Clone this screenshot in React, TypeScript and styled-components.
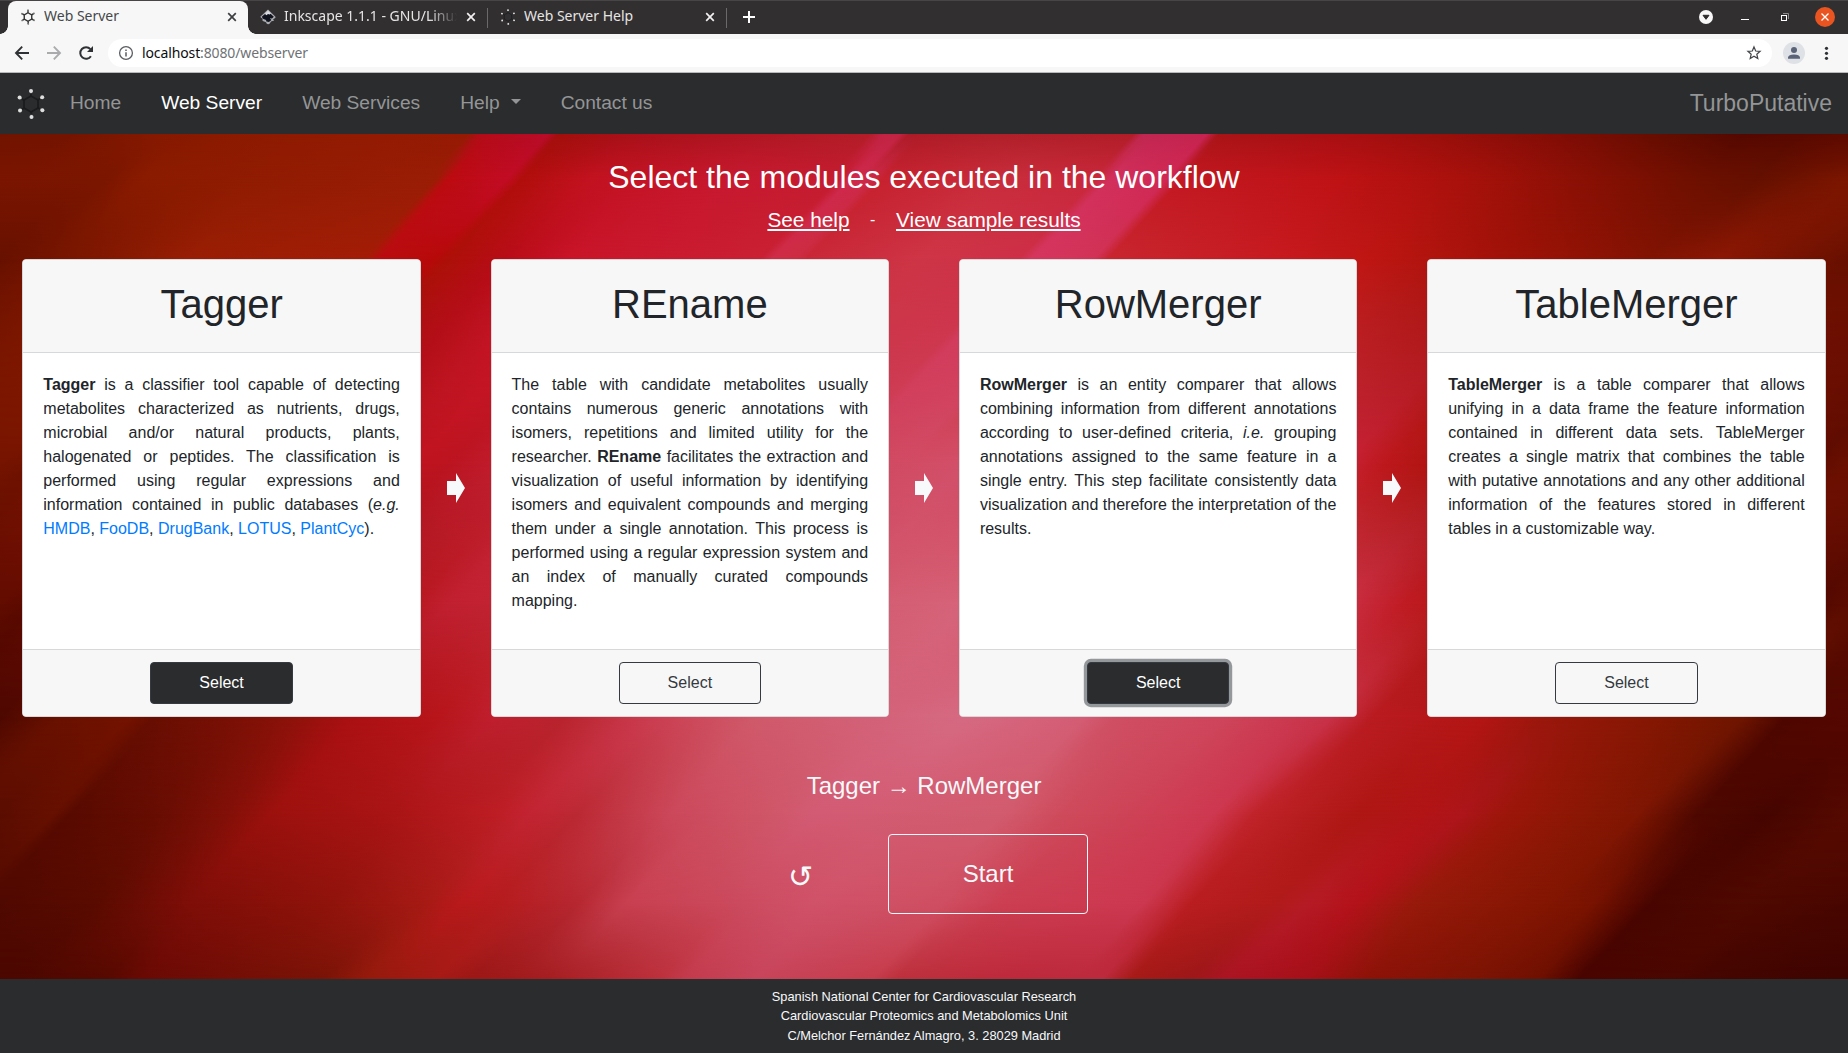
import React from 'react';
import styled, { createGlobalStyle, css } from 'styled-components';

const GlobalStyle = createGlobalStyle`
  *, *::before, *::after { box-sizing: border-box; }
  body {
    margin: 0;
    overflow: hidden;
    font-family: "Liberation Sans", Arial, sans-serif;
    font-size: 16px;
    line-height: 1.5;
    color: #212529;
  }
  h1, h2, p { margin: 0; font-weight: 400; }
  button { font-family: inherit; cursor: pointer; }
`;

const Page = styled.div`
  width: 1848px;
  height: 1053px;
  display: flex;
  flex-direction: column;
`;

/* ---------- browser window ---------- */

const TabStrip = styled.div`
  height: 34px;
  flex: none;
  display: flex;
  align-items: stretch;
  padding-left: 8px;
  background: #322f30;
  border-top: 1px solid #474546;
  font-family: "Noto Sans", sans-serif;
  font-size: 14px;
`;

const Tab = styled.div<{ $active?: boolean; $width: number }>`
  position: relative;
  width: ${p => p.$width}px;
  display: flex;
  align-items: center;
  gap: 8px;
  padding: 0 10px 1px 12px;
  color: ${p => (p.$active ? '#45484a' : '#e6e5e4')};
  ${p => p.$active && css`
    background: #f7f7f7;
    border-radius: 8px 8px 0 0;
    &::before, &::after {
      content: "";
      position: absolute;
      bottom: 0;
      width: 8px;
      height: 8px;
    }
    &::before { left: -8px; background: radial-gradient(circle at 0 0, transparent 7.5px, #f7f7f7 8px); }
    &::after { right: -8px; background: radial-gradient(circle at 100% 0, transparent 7.5px, #f7f7f7 8px); }
  `}
`;

const TabTitle = styled.span<{ $fade?: boolean; $tracking?: number }>`
  flex: 1;
  min-width: 0;
  margin-top: -2px;
  overflow: hidden;
  white-space: nowrap;
  line-height: 20px;
  letter-spacing: ${p => p.$tracking ?? 0}px;
  ${p => p.$fade && css`mask-image: linear-gradient(to right, #000 calc(100% - 28px), transparent);`}
`;

const TabDivider = styled.span`
  width: 1px;
  height: 20px;
  align-self: center;
  background: #6b696a;
`;

const NewTab = styled.div`
  flex: 1;
  display: flex;
  align-items: center;
  padding: 0 0 1px 16px;
`;

const WindowButtons = styled.div`
  display: flex;
  align-items: center;
  padding: 0 13px 1px 0;
  gap: 20px;
`;

const Toolbar = styled.div`
  height: 39px;
  flex: none;
  display: flex;
  align-items: center;
  padding: 0 14px;
  background: #f7f7f7;
  border-bottom: 1px solid #b9b9b9;
`;

const NavButtons = styled.div`
  display: flex;
  gap: 16px;
  width: 94px;
`;

const AddressBar = styled.div`
  flex: 1;
  height: 28px;
  display: flex;
  align-items: center;
  gap: 8px;
  padding: 0 10px;
  border-radius: 14px;
  background: #fff;
  font-family: "Noto Sans", sans-serif;
  font-size: 14px;
  letter-spacing: -0.12px;
  color: #6f7275;
`;

const Address = styled.span`
  flex: 1;
  line-height: 20px;
  b { font-weight: 400; color: #0c0d0e; }
`;

const ToolbarEnd = styled.div`
  display: flex;
  align-items: center;
  gap: 13px;
  padding-left: 11px;
`;

/* ---------- site navigation ---------- */

const Navbar = styled.nav`
  height: 61px;
  flex: none;
  display: flex;
  align-items: center;
  padding: 0 16px;
  background: #2a2c2e;
`;

const NavLinks = styled.div`
  flex: 1;
  display: flex;
  gap: 40px;
  padding-left: 24px;
  font-size: 19.2px;
`;

const NavLink = styled.span<{ $active?: boolean }>`
  display: flex;
  align-items: center;
  color: ${p => (p.$active ? '#fff' : '#949596')};
`;

const Caret = styled.span`
  margin: -4px 0 0 11px;
  border: 5.76px solid transparent;
  border-top-color: currentColor;
  border-bottom: 0;
`;

const Brand = styled.span`
  font-size: 23px;
  color: #949596;
`;

/* ---------- main area ---------- */

const Hero = styled.main`
  position: relative;
  height: 845px;
  flex: none;
  display: flex;
  flex-direction: column;
  align-items: center;
  overflow: hidden;
  background: #a01515;
`;

const Backdrop = styled.svg`
  position: absolute;
  inset: 0;
`;

const Content = styled.div`
  position: relative;
  width: 100%;
  padding: 24px 22.3px 0;
  display: flex;
  flex-direction: column;
  align-items: center;
`;

const Heading = styled.h1`
  font-size: 32px;
  line-height: 38px;
  color: #fff;
`;

const HelpLinks = styled.div`
  display: flex;
  align-items: center;
  gap: 20.6px;
  height: 31px;
  margin-top: 8px;
  color: #fff;
`;

const HelpLink = styled.a`
  font-size: 20.8px;
  text-decoration: underline;
`;

const Modules = styled.section`
  width: 100%;
  height: 458px;
  margin-top: 24px;
  display: grid;
  grid-template-columns: 1fr 69.8px 1fr 69.8px 1fr 69.8px 1fr;
`;

const ArrowCell = styled.div`
  display: flex;
  align-items: center;
  justify-content: center;
`;

const Card = styled.article`
  display: flex;
  flex-direction: column;
  min-width: 0;
  border: 1px solid #d6d8d9;
  border-radius: 4px;
  background: #fff;
  overflow: hidden;
`;

const CardHeader = styled.header`
  height: 93px;
  display: flex;
  align-items: center;
  justify-content: center;
  background: #f7f7f7;
  border-bottom: 1px solid #d6d8d9;
  padding-bottom: 4px;
  h2 { font-size: 40px; line-height: 48px; }
`;

const CardBody = styled.div`
  flex: 1;
  padding: 20px;
  text-align: justify;
  a { color: #007bff; }
`;

const CardFooter = styled.footer`
  padding: 12px 20px;
  display: flex;
  justify-content: center;
  background: #f7f7f7;
  border-top: 1px solid #d6d8d9;
`;

const SelectButton = styled.button<{ $selected?: boolean; $focused?: boolean }>`
  width: 40%;
  height: 42px;
  padding: 0;
  border: 1px solid #343a40;
  border-radius: 4px;
  font-size: 16px;
  background: ${p => (p.$selected ? '#2a2c2e' : 'transparent')};
  color: ${p => (p.$selected ? '#fff' : '#343a40')};
  box-shadow: ${p => (p.$focused ? '0 0 0 3.2px rgba(52, 58, 64, 0.5)' : 'none')};
`;

const Workflow = styled.p`
  margin-top: 51px;
  font-size: 24px;
  line-height: 36px;
  color: #f8f9fa;
`;

const Actions = styled.div`
  display: flex;
  align-items: center;
  gap: 77px;
  margin-top: 30px;
  padding-left: 28px;
`;

const StartButton = styled.button`
  width: 200px;
  height: 80px;
  border: 1px solid #f8f9fa;
  border-radius: 4px;
  background: transparent;
  color: #f8f9fa;
  font-size: 24px;
`;

const ResetButton = styled.button`
  border: 0;
  padding: 6px 0 0;
  width: 23px;
  background: transparent;
  color: #f8f9fa;
  font-family: "DejaVu Sans", sans-serif;
  font-size: 30px;
  line-height: 40px;
`;

const SiteFooter = styled.footer`
  flex: 1;
  padding-top: 8px;
  background: #2a2c2e;
  color: #f8f9fa;
  text-align: center;
  font-size: 12.8px;
  line-height: 19.4px;
`;

/* ---------- drawings ---------- */

const CloseMark = ({ color }: { color: string }) => (
  <svg width="12" height="12" viewBox="0 0 12 12" stroke={color} strokeWidth="1.7">
    <path d="M2.2 2.2l7.6 7.6M9.8 2.2l-7.6 7.6" />
  </svg>
);

const HEX = [[0, -13], [11.2, -6.8], [11.4, 6.2], [0.5, 13], [-11, 6.6], [-11.4, -6.4]];

type MoleculeProps = { size: number; ring: string; dot: string; radius?: number; bond?: number };

const Molecule = ({ size, ring, dot, radius = 2, bond = 1.8 }: MoleculeProps) => (
  <svg width={size} height={size} viewBox="-15 -15 30 30" fill="none">
    <path d="M0-8L7-4V4L0 8L-7 4V-4Z" stroke={ring} strokeWidth={bond} />
    {HEX.map(([x, y]) => (
      <g key={`${x}${y}`}>
        <path d={`M${x * 0.6} ${y * 0.6}L${x} ${y}`} stroke={ring} strokeWidth={bond} />
        <path d={`M${x * 0.82} ${y * 0.82}L${x} ${y}`} stroke={dot} strokeWidth={bond} opacity="0.5" />
        <circle cx={x} cy={y} r={radius} fill={dot} />
      </g>
    ))}
  </svg>
);

const InkscapeMark = () => (
  <svg width="16" height="16" viewBox="0 0 16 16">
    <path d="M8 .4L15.2 7.4q1 1.2-.8 2.2l-1.4.6 1.2 1.2-3.2 1.2-1.2 2q-1.6 1.4-3.2 0l-.6-1.4-3.2-1.2-.6-1.2.8-.8L.8 8.6q-.6-.8 0-1.4z" fill="#a9acb0" />
    <path d="M8 2.4L13.8 7.8 12 9.4 9.8 9.2 11.4 11 9 13 6.4 12.6 6 11 3 9.8 1.8 7.8z" fill="#10121d" />
    <path d="M8 1.6l3 3-1.4.8L8 5 6.4 6.2 4.8 4.8z" fill="#d9dbe0" />
  </svg>
);

const ModuleArrow = () => (
  <svg width="18" height="30" viewBox="0 0 18 30">
    <path d="M0 8H9V0L18 15L9 30V22H0Z" fill="#f8f9fa" />
  </svg>
);

/* Satin folds: each entry is a horizontal colour profile at one height; the
   profiles are blended along the direction in which the folds lean. */
const LEAN = 0.94;
const UNIT = 1848 / 1568;
type Profile = { y: number; stops: [number, string][] };

const FOLDS: Profile[] = [
  { y: 0, stops: [[0, '#701400'], [60, '#741400'], [130, '#861900'], [240, '#8f1b02'], [340, '#951b03'], [398, '#961a04'], [408, '#b40b18'], [465, '#b80c28'], [474, '#a30f0c'], [530, '#a81018'], [640, '#b01622'], [738, '#b31d28'], [750, '#c32444'], [764, '#c22442'], [771, '#ae1b27'], [850, '#b0212a'], [962, '#b21d28'], [970, '#c02750'], [1024, '#c72350'], [1034, '#a91417'], [1140, '#a90f12'], [1230, '#980f0a'], [1330, '#7f0d06'], [1420, '#620d00'], [1480, '#540800'], [1568, '#5e0a00']] },
  { y: 45, stops: [[0, '#7a1500'], [90, '#7b1600'], [120, '#8a1b00'], [370, '#9a1d05'], [380, '#bc0b10'], [430, '#c20c24'], [443, '#b10e0c'], [500, '#c31220'], [620, '#c71930'], [712, '#c51c30'], [722, '#cf284c'], [739, '#cd2948'], [749, '#c7222f'], [850, '#c92d3c'], [930, '#c9283b'], [942, '#d2305c'], [990, '#d02854'], [1003, '#c31821'], [1140, '#be1215'], [1240, '#a9110c'], [1350, '#881004'], [1430, '#701000'], [1490, '#641000'], [1568, '#7c1600']] },
  { y: 125, stops: [[0, '#681100'], [60, '#791600'], [160, '#991e04'], [310, '#a31c06'], [322, '#b90c10'], [368, '#b70909'], [380, '#ad1008'], [430, '#b80c18'], [480, '#c91428'], [645, '#ca2034'], [655, '#cf2c48'], [675, '#cd2c42'], [685, '#c92838'], [780, '#ce3546'], [865, '#ce3048'], [875, '#d5365e'], [928, '#d23356'], [940, '#c82630'], [1080, '#c71a20'], [1160, '#bf1613'], [1260, '#a51209'], [1400, '#821302'], [1460, '#8c1704'], [1568, '#681000']] },
  { y: 330, stops: [[0, '#751400'], [30, '#701200'], [350, '#c01420'], [380, '#bc1420'], [420, '#c01c2c'], [750, '#d14a62'], [820, '#d3506a'], [1140, '#c82236'], [1175, '#bd181c'], [1220, '#ae1410'], [1540, '#5f0c00'], [1568, '#6b1000']] },
  { y: 470, stops: [[0, '#620c00'], [30, '#5a0900'], [350, '#b81820'], [380, '#c12030'], [430, '#c22433'], [750, '#d45e73'], [820, '#d6647a'], [1140, '#cb3045'], [1190, '#c01c24'], [1230, '#b41815'], [1540, '#520800'], [1568, '#5c0c00']] },
  { y: 583, stops: [[0, '#4d0800'], [50, '#6a1100'], [110, '#741200'], [130, '#680e02'], [200, '#7b1006'], [245, '#8c120a'], [300, '#ac1013'], [370, '#b7151a'], [420, '#c01f2e'], [480, '#b9242e'], [550, '#cb3c50'], [640, '#d05a6a'], [730, '#d36177'], [820, '#d66a82'], [920, '#d45d74'], [945, '#d04f63'], [1040, '#cf455b'], [1130, '#c83148'], [1165, '#b91b20'], [1260, '#b31514'], [1310, '#9a170c'], [1410, '#831703'], [1480, '#6e1500'], [1515, '#4e0700'], [1568, '#550700']] },
  { y: 680, stops: [[0, '#5b0d00'], [45, '#661000'], [60, '#580a00'], [135, '#680d02'], [190, '#801008'], [230, '#9c110d'], [330, '#a91414'], [420, '#bd1d24'], [450, '#c32432'], [490, '#bb2933'], [570, '#cc485b'], [650, '#cf5667'], [690, '#d35b74'], [850, '#d25c6e'], [900, '#ce4b5c'], [1030, '#ce3850'], [1065, '#c02329'], [1150, '#ae1714'], [1210, '#b21416'], [1240, '#ad151b'], [1280, '#9c1609'], [1340, '#8b1704'], [1390, '#7f1603'], [1440, '#4e0800'], [1500, '#460500'], [1568, '#560a00']] },
  { y: 770, stops: [[0, '#500900'], [80, '#590b00'], [160, '#7e0e08'], [280, '#8f130b'], [360, '#a61a14'], [390, '#b9191b'], [420, '#b51b1d'], [490, '#b62730'], [530, '#c83f50'], [600, '#ca4759'], [690, '#d05269'], [800, '#cf4e61'], [850, '#cc3e52'], [970, '#cc3850'], [1010, '#b91d20'], [1080, '#b11b1a'], [1110, '#b51b25'], [1150, '#b4121a'], [1200, '#971a0b'], [1300, '#851603'], [1350, '#7a1301'], [1400, '#480500'], [1480, '#4f0900'], [1568, '#480600']] },
  { y: 845, stops: [[0, '#4a0700'], [90, '#560900'], [120, '#690904'], [210, '#741006'], [275, '#7a1307'], [310, '#941a0c'], [370, '#a61a15'], [400, '#9b1716'], [465, '#a51d20'], [560, '#bd303c'], [580, '#c33a4c'], [640, '#c7445a'], [740, '#c63c4c'], [760, '#bd303c'], [860, '#bd293b'], [935, '#bd2a3d'], [960, '#a51a17'], [1010, '#9d1719'], [1040, '#ab1423'], [1110, '#a61018'], [1160, '#8d1208'], [1250, '#7d1404'], [1305, '#701001'], [1340, '#490400'], [1420, '#4a0600'], [1450, '#450500'], [1568, '#3e0400']] },
];

const SatinBackdrop = () => (
  <Backdrop width="1848" height="845" viewBox="0 0 1848 845" aria-hidden>
    <defs>
      {FOLDS.map(({ y, stops }, i) => {
        const shift = y * LEAN;
        const last = stops[stops.length - 1][0];
        const prev = i > 0 ? FOLDS[i - 1].y : 0;
        return (
          <React.Fragment key={y}>
            <linearGradient id={`fold${i}`} gradientUnits="userSpaceOnUse" x1={shift} x2={shift + last * UNIT} y1="0" y2="0">
              {stops.map(([x, c]) => <stop key={x} offset={x / last} stopColor={c} />)}
            </linearGradient>
            {i > 0 && (
              <>
                <linearGradient id={`fade${i}`} gradientUnits="userSpaceOnUse" x1="0" x2="0" y1={prev} y2={y}>
                  <stop offset="0" stopColor="#000" />
                  <stop offset="1" stopColor="#fff" />
                </linearGradient>
                <mask id={`mask${i}`} maskUnits="userSpaceOnUse" x="-100" y={prev} width="2900" height={845 - prev}>
                  <rect x="-100" y={prev} width="2900" height={845 - prev} fill={`url(#fade${i})`} />
                </mask>
              </>
            )}
          </React.Fragment>
        );
      })}
    </defs>
    <g transform={`matrix(1 0 ${-LEAN} 1 0 0)`}>
      {FOLDS.map(({ y }, i) => {
        const top = i > 0 ? FOLDS[i - 1].y : 0;
        return (
          <rect key={y} x="-100" y={top} width="2900" height={845 - top} fill={`url(#fold${i})`} mask={i > 0 ? `url(#mask${i})` : undefined} />
        );
      })}
    </g>
  </Backdrop>
);

/* ---------- content ---------- */

type Module = { name: string; selected?: boolean; focused?: boolean; text: React.ReactNode };

const MODULES: Module[] = [
  {
    name: 'Tagger',
    selected: true,
    text: (
      <>
        <b>Tagger</b> is a classifier tool capable of detecting metabolites characterized as nutrients, drugs,
        microbial and/or natural products, plants, halogenated or peptides. The classification is performed using
        regular expressions and information contained in public databases (<i>e.g.</i> <a>HMDB</a>, <a>FooDB</a>,{' '}
        <a>DrugBank</a>, <a>LOTUS</a>, <a>PlantCyc</a>).
      </>
    ),
  },
  {
    name: 'REname',
    text: (
      <>
        The table with candidate metabolites usually contains numerous generic annotations with isomers, repetitions
        and limited utility for the researcher. <b>REname</b> facilitates the extraction and visualization of useful
        information by identifying isomers and equivalent compounds and merging them under a single annotation. This
        process is performed using a regular expression system and an index of manually curated compounds mapping.
      </>
    ),
  },
  {
    name: 'RowMerger',
    selected: true,
    focused: true,
    text: (
      <>
        <b>RowMerger</b> is an entity comparer that allows combining information from different annotations according
        to user-defined criteria, <i>i.e.</i> grouping annotations assigned to the same feature in a single entry.
        This step facilitate consistently data visualization and therefore the interpretation of the results.
      </>
    ),
  },
  {
    name: 'TableMerger',
    text: (
      <>
        <b>TableMerger</b> is a table comparer that allows unifying in a data frame the feature information contained
        in different data sets. TableMerger creates a single matrix that combines the table with putative annotations
        and any other additional information of the features stored in different tables in a customizable way.
      </>
    ),
  },
];

const BrowserChrome = () => (
  <>
    <TabStrip>
      <Tab $active $width={240}>
        <Molecule size={16} ring="#333" dot="#777" radius={1.6} bond={2.6} />
        <TabTitle>Web Server</TabTitle>
        <CloseMark color="#3c3f41" />
      </Tab>
      <Tab $width={239}>
        <InkscapeMark />
        <TabTitle $fade>Inkscape 1.1.1 - GNU/Linux</TabTitle>
        <CloseMark color="#f2f1f0" />
      </Tab>
      <TabDivider />
      <Tab $width={238}>
        <Molecule size={16} ring="#1d2022" dot="#e8e8e8" radius={1.7} />
        <TabTitle>Web Server Help</TabTitle>
        <CloseMark color="#f2f1f0" />
      </Tab>
      <TabDivider />
      <NewTab>
        <svg width="12" height="12" stroke="#fff" strokeWidth="2"><path d="M6 0V12M0 6H12" /></svg>
      </NewTab>
      <WindowButtons>
        <svg width="20" height="20" viewBox="0 0 20 20">
          <circle cx="11" cy="10" r="7" fill="#f7f7f7" />
          <path d="M8 8.3H14L11 12.3Z" fill="#2c2a2b" stroke="#2c2a2b" />
        </svg>
        <svg width="20" height="20"><path d="M6 12.5H14" stroke="#fff" /></svg>
        <svg width="20" height="20" fill="none">
          <path d="M8 6.5H13.5V12" stroke="#8b898a" />
          <rect x="6.5" y="8.5" width="5" height="5" stroke="#fff" />
        </svg>
        <svg width="20" height="20">
          <circle cx="10" cy="10" r="10" fill="#e95420" />
          <path d="M6.5 6.5L13.5 13.5M13.5 6.5L6.5 13.5" stroke="#fff" strokeWidth="1.3" />
        </svg>
      </WindowButtons>
    </TabStrip>
    <Toolbar>
      <NavButtons>
        <svg width="16" height="16" fill="none" stroke="#2f3234" strokeWidth="1.9"><path d="M15 8H2.5M8.2 1.7L2 8L8.2 14.3" /></svg>
        <svg width="16" height="16" fill="none" stroke="#aaabac" strokeWidth="1.9"><path d="M1 8H13.5M7.8 1.7L14 8L7.8 14.3" /></svg>
        <svg width="16" height="16" viewBox="0 0 16 16" fill="none">
          <path d="M12.9 11.2A5.8 5.8 0 1 1 12.4 4.1" stroke="#2f3234" strokeWidth="2" />
          <path d="M15 1V7H9Z" fill="#2f3234" />
        </svg>
      </NavButtons>
      <AddressBar>
        <svg width="16" height="16" viewBox="0 0 16 16" fill="none" stroke="#5a5d61">
          <circle cx="8" cy="8" r="6.4" strokeWidth="1.3" />
          <path d="M8 7.2V11.4M8 4.4V6" strokeWidth="1.5" />
        </svg>
        <Address><b>localhost</b>:8080/webserver</Address>
        <svg width="16" height="16" viewBox="0 0 16 16" fill="none" stroke="#414447" strokeWidth="1.2">
          <path d="M8 1.9L9.7 6L14.1 6.3L10.8 9.2L11.8 13.5L8 11.2L4.2 13.5L5.2 9.2L1.9 6.3L6.3 6Z" />
        </svg>
      </AddressBar>
      <ToolbarEnd>
        <svg width="22" height="22" viewBox="0 0 22 22">
          <circle cx="11" cy="11" r="11" fill="#dee1e6" />
          <circle cx="11" cy="8" r="3" fill="#5a6378" />
          <path d="M5 16.8V15.3Q5.5 12.4 11 12.4T17 15.3V16.8Z" fill="#5a6378" />
        </svg>
        <svg width="16" height="16" fill="#2f3234">
          <circle cx="8.5" cy="3.3" r="1.6" /><circle cx="8.5" cy="8.3" r="1.6" /><circle cx="8.5" cy="13.3" r="1.6" />
        </svg>
      </ToolbarEnd>
    </Toolbar>
  </>
);

export default function App() {
  return (
    <Page>
      <GlobalStyle />
      <BrowserChrome />
      <Navbar>
        <Molecule size={30} ring="#1a1c1d" dot="#dedede" />
        <NavLinks>
          <NavLink>Home</NavLink>
          <NavLink $active>Web Server</NavLink>
          <NavLink>Web Services</NavLink>
          <NavLink>Help<Caret /></NavLink>
          <NavLink>Contact us</NavLink>
        </NavLinks>
        <Brand>TurboPutative</Brand>
      </Navbar>
      <Hero>
        <SatinBackdrop />
        <Content>
          <Heading>Select the modules executed in the workflow</Heading>
          <HelpLinks>
            <HelpLink>See help</HelpLink>
            <span>-</span>
            <HelpLink>View sample results</HelpLink>
          </HelpLinks>
          <Modules>
            {MODULES.map((m, i) => (
              <React.Fragment key={m.name}>
                {i > 0 && <ArrowCell><ModuleArrow /></ArrowCell>}
                <Card>
                  <CardHeader><h2>{m.name}</h2></CardHeader>
                  <CardBody>{m.text}</CardBody>
                  <CardFooter>
                    <SelectButton $selected={m.selected} $focused={m.focused}>Select</SelectButton>
                  </CardFooter>
                </Card>
              </React.Fragment>
            ))}
          </Modules>
          <Workflow>Tagger → RowMerger</Workflow>
          <Actions>
            <ResetButton>↺</ResetButton>
            <StartButton>Start</StartButton>
          </Actions>
        </Content>
      </Hero>
      <SiteFooter>
        <div>Spanish National Center for Cardiovascular Research</div>
        <div>Cardiovascular Proteomics and Metabolomics Unit</div>
        <div>C/Melchor Fernández Almagro, 3. 28029 Madrid</div>
      </SiteFooter>
    </Page>
  );
}
